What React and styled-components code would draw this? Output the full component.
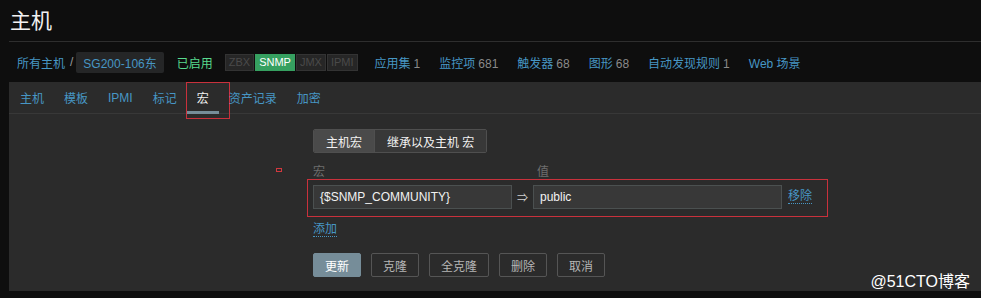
import React from 'react';
import styled, { createGlobalStyle } from 'styled-components';

const GlobalStyle = createGlobalStyle`
  html, body {
    margin: 0;
    padding: 0;
    background: #0e0e0e;
  }
  body {
    font-family: "Liberation Sans", Arial, "Noto Sans CJK SC", sans-serif;
    font-size: 12px;
    color: #f2f2f2;
  }
`;

const Page = styled.div`
  position: relative;
  width: 981px;
  height: 298px;
  overflow: hidden;
  padding-left: 9px;
  box-sizing: border-box;
`;

const Header = styled.div`
  height: 41px;
  border-bottom: 1px solid #2e2e2e;
  display: flex;
  align-items: center;
`;

const Title = styled.h1`
  margin: 0 0 0 1px;
  font-size: 21px;
  font-weight: normal;
  color: #f2f2f2;
  line-height: 1;
`;

const Nav = styled.div`
  height: 40px;
  display: flex;
  align-items: center;
  padding-left: 8px;
`;

const Link = styled.span`
  color: #4796c4;
  white-space: nowrap;
`;

const Slash = styled.span`
  color: #9a9a9a;
  margin: 0 3px 0 5px;
`;

const HostBox = styled.span`
  display: inline-flex;
  align-items: center;
  height: 21px;
  padding: 0 7px;
  background: #252627;
  border-radius: 2px;
  color: #4796c4;
  margin-right: 13px;
`;

const Enabled = styled.span`
  color: #59db8f;
  margin-right: 12px;
`;

const Badges = styled.div`
  display: flex;
  gap: 1px;
  margin-right: 17px;
`;

const Badge = styled.span`
  height: 17px;
  display: inline-flex;
  align-items: center;
  padding: 0 3px;
  font-size: 11px;
  background: ${p => (p.$on ? '#36a060' : '#262626')};
  color: ${p => (p.$on ? '#ffffff' : '#4a4a4a')};
  border: 1px solid ${p => (p.$on ? '#36a060' : '#333333')};
  box-sizing: border-box;
`;

const NavLinks = styled.div`
  display: flex;
  gap: 19px;
`;

const Count = styled.span`
  color: #8a8a8a;
  margin-left: 3px;
`;

const Panel = styled.div`
  position: relative;
  background: #2b2b2b;
  height: 209px;
`;

const TabList = styled.div`
  display: flex;
  height: 31px;
  border-bottom: 1px solid #383838;
  padding-left: 1px;
`;

const Tab = styled.div`
  position: relative;
  padding: 0 10px;
  display: flex;
  align-items: center;
  color: ${p => (p.$active ? '#f2f2f2' : '#4796c4')};
  &::after {
    content: '';
    display: ${p => (p.$active ? 'block' : 'none')};
    position: absolute;
    left: 0;
    right: 0;
    bottom: -1px;
    height: 3px;
    background: #768d99;
  }
`;

const Annotation = styled.div`
  position: absolute;
  border: 1px solid #c9313c;
  pointer-events: none;
`;

const FormBody = styled.div`
  padding: 15px 0 0 304px;
`;

const Segmented = styled.div`
  display: inline-flex;
  height: 24px;
  border: 1px solid #4f4f4f;
  border-radius: 2px;
  box-sizing: border-box;
  overflow: hidden;
`;

const Segment = styled.span`
  display: flex;
  align-items: center;
  padding: 0 12px;
  background: ${p => (p.$active ? '#4a4a4a' : '#383838')};
  color: #f2f2f2;
  & + & {
    border-left: 1px solid #4f4f4f;
  }
`;

const Labels = styled.div`
  position: relative;
  display: grid;
  grid-template-columns: 222px auto;
  margin-top: 13px;
  height: 12px;
  line-height: 12px;
  color: #6e6e6e;
`;

const ValueLabel = styled.span`
  padding-left: 2px;
`;

const RequiredMark = styled.span`
  position: absolute;
  left: -37px;
  top: 2px;
  width: 4px;
  height: 2px;
  border: 1px solid #d1383e;
`;

const MacroRow = styled.div`
  display: flex;
  align-items: center;
  margin: 1px 0 0 -6px;
  width: 521px;
  height: 38px;
  padding: 0 5px 2px;
  box-sizing: border-box;
  border: 1px solid #c9313c;
`;

const Input = styled.div`
  width: ${p => p.$w}px;
  height: 24px;
  display: flex;
  align-items: center;
  padding: 0 6px;
  box-sizing: border-box;
  background: #383838;
  border: 1px solid #4b5050;
  color: #f2f2f2;
`;

const Arrow = styled.span`
  width: 21px;
  text-align: center;
  color: #d0d0d0;
  font-size: 11px;
`;

const DottedLink = styled.span`
  color: #4796c4;
  border-bottom: 1px dotted #4796c4;
  line-height: 13px;
  margin-left: ${p => p.$ml || 0}px;
`;

const AddRow = styled.div`
  margin-top: 5px;
  height: 16px;
`;

const Buttons = styled.div`
  display: flex;
  gap: 10px;
  margin-top: 15px;
`;

const Button = styled.span`
  height: 24px;
  display: inline-flex;
  align-items: center;
  padding: 0 11px;
  box-sizing: border-box;
  border-radius: 2px;
  border: 1px solid ${p => (p.$primary ? '#768d99' : '#555555')};
  background: ${p => (p.$primary ? '#768d99' : 'transparent')};
  color: ${p => (p.$primary ? '#ffffff' : '#b5b5b5')};
`;

const Watermark = styled.div`
  position: absolute;
  right: 11px;
  bottom: 6px;
  font-size: 16px;
  color: #ffffff;
  font-family: "Liberation Sans", Arial, "Noto Sans CJK SC", sans-serif;
`;

const tabs = ['主机', '模板', 'IPMI', '标记', '宏', '资产记录', '加密'];

const links = [
  ['应用集', '1'],
  ['监控项', '681'],
  ['触发器', '68'],
  ['图形', '68'],
  ['自动发现规则', '1'],
  ['Web 场景', null],
];

const App = () => (
  <Page>
    <GlobalStyle />
    <Header>
      <Title>主机</Title>
    </Header>
    <Nav>
      <Link>所有主机</Link>
      <Slash>/</Slash>
      <HostBox>SG200-106东</HostBox>
      <Enabled>已启用</Enabled>
      <Badges>
        <Badge>ZBX</Badge>
        <Badge $on>SNMP</Badge>
        <Badge>JMX</Badge>
        <Badge>IPMI</Badge>
      </Badges>
      <NavLinks>
        {links.map(([name, count]) => (
          <Link key={name}>
            {name}
            {count && <Count>{count}</Count>}
          </Link>
        ))}
      </NavLinks>
    </Nav>
    <Panel>
      <TabList>
        {tabs.map(t => (
          <Tab key={t} $active={t === '宏'}>
            {t}
            {t === '宏' && (
              <Annotation style={{ left: -1, top: 0, width: 42, height: 35 }} />
            )}
          </Tab>
        ))}
      </TabList>
      <FormBody>
        <Segmented>
          <Segment $active>主机宏</Segment>
          <Segment>继承以及主机 宏</Segment>
        </Segmented>
        <Labels>
          <RequiredMark />
          <span>宏</span>
          <ValueLabel>值</ValueLabel>
        </Labels>
        <MacroRow>
          <Input $w={199}>{'{$SNMP_COMMUNITY}'}</Input>
          <Arrow>⇒</Arrow>
          <Input $w={249}>public</Input>
          <DottedLink $ml={6}>移除</DottedLink>
        </MacroRow>
        <AddRow>
          <DottedLink>添加</DottedLink>
        </AddRow>
        <Buttons>
          <Button $primary>更新</Button>
          <Button>克隆</Button>
          <Button>全克隆</Button>
          <Button>删除</Button>
          <Button>取消</Button>
        </Buttons>
      </FormBody>
    </Panel>
    <Watermark>@51CTO博客</Watermark>
  </Page>
);

export default App;
